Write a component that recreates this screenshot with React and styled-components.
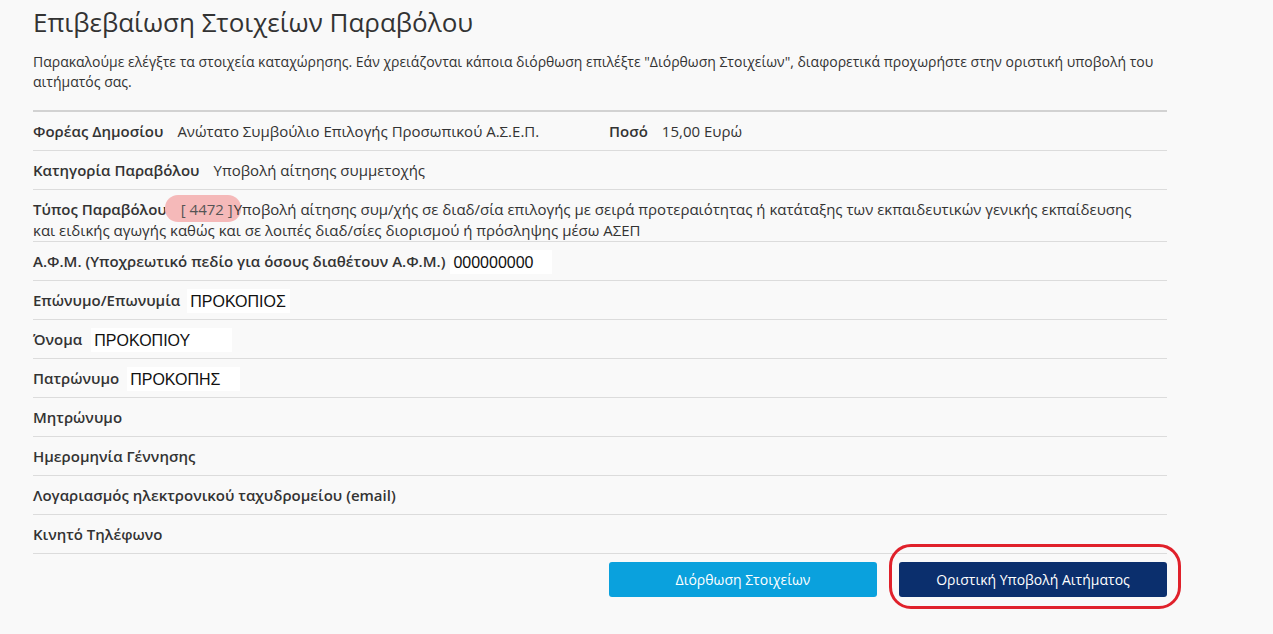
import React from "react";
import styled, { createGlobalStyle } from "styled-components";

const GlobalStyle = createGlobalStyle`
  html, body {
    margin: 0;
    padding: 0;
    background: #f9f9f9;
  }
  body {
    font-family: "Open Sans", "Noto Sans", sans-serif;
    color: #333;
  }
`;

const Page = styled.div`
  width: 1134px;
  padding: 0 0 30px 33px;
`;

const Title = styled.h1`
  margin: 0;
  padding-top: 4px;
  font-size: 26px;
  line-height: 36px;
  font-weight: 400;
  color: #333;
`;

const Intro = styled.p`
  margin: 12px 0 0;
  font-size: 14px;
  line-height: 20px;
  color: #333;
  padding-bottom: 18px;
  border-bottom: 2px solid #d2d2d2;
`;

const Row = styled.div`
  display: ${(p) => (p.$split ? "grid" : "block")};
  grid-template-columns: 576px 1fr;
  padding: ${(p) => (p.$tight ? "9px 0 0" : "9px 0 8px")};
  font-size: 15px;
  line-height: 21px;
  border-bottom: 1px solid #dcdcdc;
`;

const Label = styled.span`
  font-weight: 600;
  margin-right: ${(p) => (p.$flush ? 0 : 14)}px;
`;

const Badge = styled.span`
  display: inline;
  padding: 4px 8px 3px 16px;
  margin: 0 -7px 0 -2px;
  border-radius: 13px;
  background: #f5b9b9;
  color: #555;
`;

const Pasted = styled.span`
  display: inline;
  margin-left: ${(p) => p.$gap || 0}px;
  padding: 4px ${(p) => p.$pr || 14}px 3px 3px;
  background: #fff;
  font-family: "Liberation Sans", Arial, sans-serif;
  font-size: 16px;
  line-height: 1;
  color: #111;
  position: relative;
  top: 1px;
`;

const Actions = styled.div`
  display: flex;
  justify-content: flex-end;
  align-items: flex-start;
  gap: 22px;
  margin-top: 8px;
`;

const Button = styled.button`
  display: block;
  width: 268px;
  height: 35px;
  border: none;
  border-radius: 3px;
  background: ${(p) => (p.$dark ? "#0b2f6d" : "#0aa1dd")};
  color: #fff;
  font-family: "Open Sans", "Noto Sans", sans-serif;
  font-size: 14px;
  cursor: pointer;
`;

const Highlight = styled.div`
  position: relative;
  &::after {
    content: "";
    position: absolute;
    left: -10px;
    top: -18px;
    right: -14px;
    bottom: -12px;
    border: 3px solid #e0212b;
    border-radius: 22px;
    pointer-events: none;
  }
`;

export default function App() {
  return (
    <>
      <GlobalStyle />
      <Page>
        <Title>Επιβεβαίωση Στοιχείων Παραβόλου</Title>
        <Intro>
          Παρακαλούμε ελέγξτε τα στοιχεία καταχώρησης. Εάν χρειάζονται κάποια
          διόρθωση επιλέξτε "Διόρθωση Στοιχείων", διαφορετικά προχωρήστε στην
          οριστική υποβολή του αιτήματός σας.
        </Intro>

        <Row $split>
          <div>
            <Label>Φορέας Δημοσίου</Label>
            Ανώτατο Συμβούλιο Επιλογής Προσωπικού Α.Σ.Ε.Π.
          </div>
          <div>
            <Label>Ποσό</Label>
            15,00 Ευρώ
          </div>
        </Row>
        <Row>
          <Label>Κατηγορία Παραβόλου</Label>
          Υποβολή αίτησης συμμετοχής
        </Row>
        <Row $tight>
          <Label $flush>Τύπος Παραβόλου</Label>
          <Badge>[ 4472 ]</Badge>Υποβολή αίτησης συμ/χής σε διαδ/σία επιλογής
          με σειρά προτεραιότητας ή κατάταξης των εκπαιδευτικών γενικής
          εκπαίδευσης
          <br />
          και ειδικής αγωγής καθώς και σε λοιπές διαδ/σίες διορισμού ή
          πρόσληψης μέσω ΑΣΕΠ
        </Row>
        <Row>
          <Label>Α.Φ.Μ. (Υποχρεωτικό πεδίο για όσους διαθέτουν Α.Φ.Μ.)</Label>
          <Pasted $gap={-9} $pr={18}>000000000</Pasted>
        </Row>
        <Row>
          <Label>Επώνυμο/Επωνυμία</Label>
          <Pasted $gap={-7} $pr={4}>ΠΡΟΚΟΠΙΟΣ</Pasted>
        </Row>
        <Row>
          <Label>Όνομα</Label>
          <Pasted $gap={-5} $pr={42}>ΠΡΟΚΟΠΙΟΥ</Pasted>
        </Row>
        <Row>
          <Label>Πατρώνυμο</Label>
          <Pasted $gap={-6} $pr={20}>ΠΡΟΚΟΠΗΣ</Pasted>
        </Row>
        <Row>
          <Label>Μητρώνυμο</Label>
        </Row>
        <Row>
          <Label>Ημερομηνία Γέννησης</Label>
        </Row>
        <Row>
          <Label>Λογαριασμός ηλεκτρονικού ταχυδρομείου (email)</Label>
        </Row>
        <Row>
          <Label>Κινητό Τηλέφωνο</Label>
        </Row>

        <Actions>
          <Button>Διόρθωση Στοιχείων</Button>
          <Highlight>
            <Button $dark>Οριστική Υποβολή Αιτήματος</Button>
          </Highlight>
        </Actions>
      </Page>
    </>
  );
}
